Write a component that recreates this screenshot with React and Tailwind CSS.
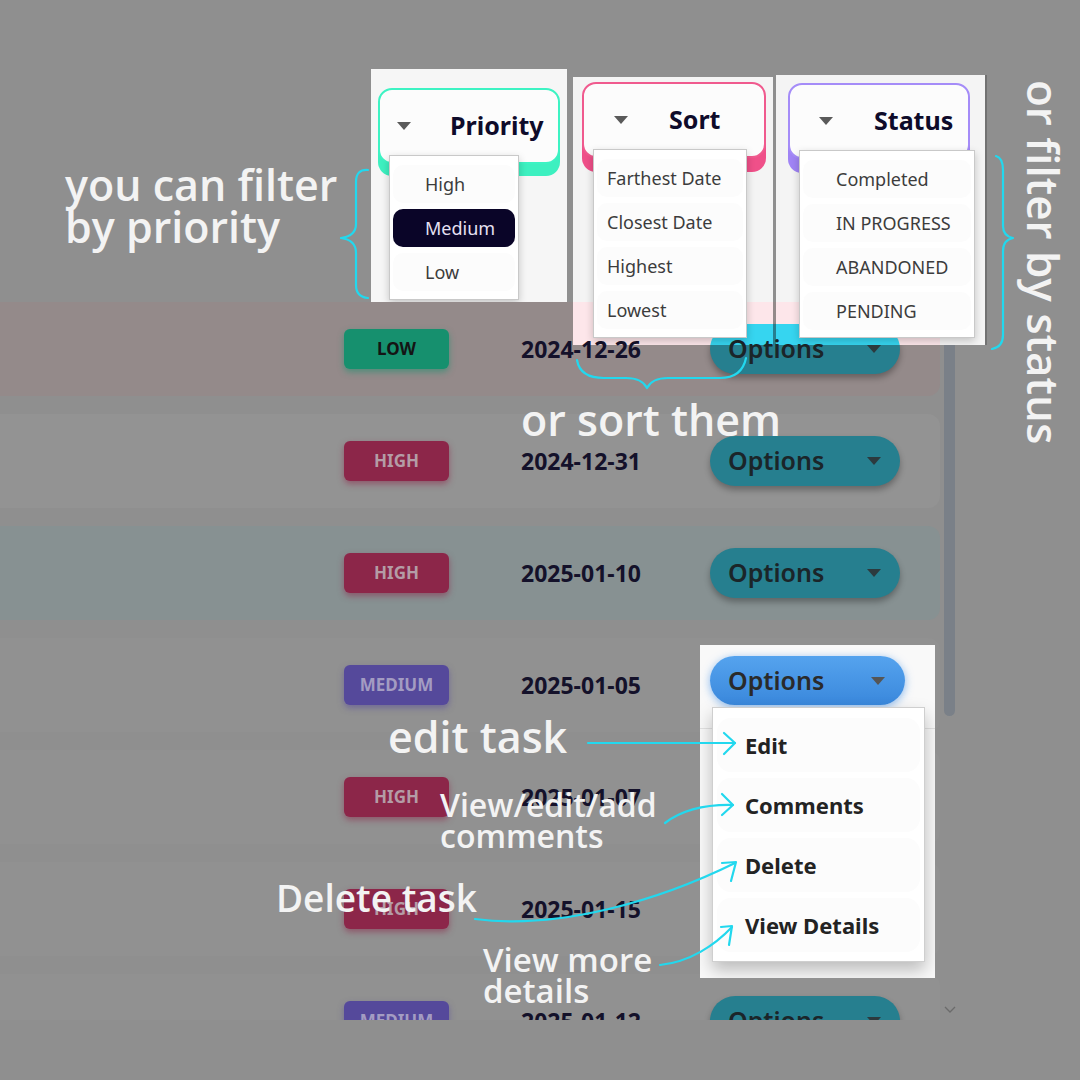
import React from 'react';

const tasks = [
  { priority: 'LOW', date: '2024-12-26', row: 'bg-[#948a8a]', bright: 'bg-[#fde6ea]' },
  { priority: 'HIGH', date: '2024-12-31', row: 'bg-[#939393]', bright: 'bg-[#f4f4f4]' },
  { priority: 'HIGH', date: '2025-01-10', row: 'bg-[#879192]', bright: 'bg-[#e6f6f7]' },
  { priority: 'MEDIUM', date: '2025-01-05', row: 'bg-[#919191]', bright: 'bg-[#f4f4f4]' },
  { priority: 'HIGH', date: '2025-01-07', row: 'bg-[#919191]', bright: 'bg-[#f4f4f4]' },
  { priority: 'HIGH', date: '2025-01-15', row: 'bg-[#919191]', bright: 'bg-[#f4f4f4]' },
  { priority: 'MEDIUM', date: '2025-01-12', row: 'bg-[#919191]', bright: 'bg-[#f4f4f4]' },
];

const badgeDim = {
  LOW: 'bg-[#16906e] text-[#141414] shadow-[0_3px_6px_rgba(22,144,110,0.55)]',
  HIGH: 'bg-[#8c2649] text-[#b49ca6] shadow-[0_3px_6px_rgba(140,38,73,0.55)]',
  MEDIUM: 'bg-[#55499b] text-[#a39cc2] shadow-[0_3px_6px_rgba(85,73,155,0.55)]',
};

const badgeBright = {
  LOW: 'bg-[#2cf0bf] text-[#141414]',
  HIGH: 'bg-[#f5407f] text-[#f0f0f0]',
  MEDIUM: 'bg-[#9581f5] text-[#f0f0f0]',
};

const Caret = ({ color = 'border-t-[#2c3a3e]' }) => (
  <span className={`w-0 h-0 border-x-[7px] border-x-transparent border-t-[8px] ${color}`} />
);

const TaskRow = ({ task, bright = false }) => (
  <div className={`h-[94px] shrink-0 flex items-center pl-[344px] rounded-r-xl ${bright ? task.bright : task.row}`}>
    <div
      className={`w-[105px] h-[40px] rounded-md flex items-center justify-center text-[17px] font-bold ${
        bright ? badgeBright[task.priority] : badgeDim[task.priority]
      }`}
    >
      {task.priority}
    </div>
    <div className="ml-[72px] w-[189px] text-[23px] font-bold text-[#14112a]">{task.date}</div>
    <div
      className={`w-[190px] h-[50px] rounded-full flex items-center justify-between pl-[18px] pr-[19px] ${
        bright ? 'bg-[#36d5f0]' : 'bg-[#267f8f] shadow-[0_4px_6px_rgba(0,0,0,0.3)]'
      }`}
    >
      <span className="text-[25px] font-semibold text-[#1b2529]">Options</span>
      <Caret />
    </div>
  </div>
);

// dropdown list that hangs below a filter button
const FilterMenu = ({ items, selected, className, textPad }) => (
  <div className={`absolute bg-white border border-[#c9c9c9] shadow-[0_3px_8px_rgba(0,0,0,0.2)] px-[3px] pt-[6px] pb-[7px] ${className}`}>
    {items.map((item) => (
      <div key={item} className="h-[44px] py-[3px]">
        <div
          className={`h-full rounded-[10px] flex items-center text-[18px] ${textPad} ${
            item === selected ? 'bg-[#0a0528] text-[#e6e0f2]' : 'bg-[#fcfcfc] text-[#3c3c3c]'
          }`}
        >
          {item}
        </div>
      </div>
    ))}
  </div>
);

const FilterButton = ({ label, className, pad, gap = 'ml-[41px]' }) => (
  <div className={`h-[76px] rounded-[14px] border-2 bg-[#fcfcfc] flex items-center ${pad} ${className}`}>
    <Caret color="border-t-[#5a5a5a]" />
    <span className={`${gap} text-[25px] font-bold text-[#0e0b2a]`}>{label}</span>
  </div>
);

export default function App() {
  return (
    <div className="relative w-[1080px] h-[1080px] overflow-hidden bg-[#8f8f8f] font-['Noto_Sans',sans-serif]">
      {/* task list behind the overlay */}
      <div className="flex pt-[302px]">
        <div className="w-[940px] h-[718px] overflow-hidden flex flex-col gap-[18px]">
          {tasks.map((t, i) => (
            <TaskRow key={i} task={t} />
          ))}
        </div>
        <div className="ml-[4px] w-[11px] h-[718px] flex flex-col justify-between items-center">
          <div className="w-[11px] h-[414px] rounded-full bg-[#7a8088]" />
          <svg width="12" height="8" viewBox="0 0 12 8" className="mb-[6px]">
            <polyline points="1,1 6,6 11,1" fill="none" stroke="#6b6b6b" strokeWidth="1.3" />
          </svg>
        </div>
      </div>

      {/* priority filter crop */}
      <div className="absolute left-[371px] top-[69px] w-[196px] h-[233px] bg-[#f6f6f6] overflow-hidden pt-[19px] pl-[7px]">
        <FilterButton
          label="Priority"
          pad="pl-[17px]"
          gap="ml-[39px]"
          className="w-[182px] border-[#3df3c3] shadow-[0_12px_0_#3df0c0]"
        />
        <FilterMenu
          items={['High', 'Medium', 'Low']}
          selected="Medium"
          className="left-[18px] top-[86px] w-[130px] h-[145px]"
          textPad="pl-[32px]"
        />
      </div>

      {/* sort crop */}
      <div className="absolute left-[573px] top-[77px] w-[200px] h-[268px] bg-[#f4f4f4] overflow-hidden pt-[5px] pl-[9px]">
        <div className="absolute left-[-573px] top-[225px] w-[940px]">
          <TaskRow task={tasks[0]} bright />
        </div>
        <FilterButton label="Sort" pad="pl-[30px]" className="relative w-[184px] border-[#f05a8e] shadow-[0_14px_0_#ef5089]" />
        <FilterMenu
          items={['Farthest Date', 'Closest Date', 'Highest', 'Lowest']}
          className="left-[20px] top-[72px] w-[154px] h-[189px]"
          textPad="pl-[10px]"
        />
      </div>

      {/* status crop */}
      <div className="absolute left-[776px] top-[75px] w-[211px] h-[270px] bg-[#f4f4f4] overflow-hidden border-r-2 border-[#727272] pt-[8px] pl-[12px]">
        <div className="absolute left-[-776px] top-[227px] w-[940px]">
          <TaskRow task={tasks[0]} bright />
        </div>
        <FilterButton label="Status" pad="pl-[29px]" className="relative w-[182px] border-[#a58cf8] shadow-[0_14px_0_#a084f5]" />
        <FilterMenu
          items={['Completed', 'IN PROGRESS', 'ABANDONED', 'PENDING']}
          className="left-[23px] top-[75px] w-[176px] h-[188px]"
          textPad="pl-[33px]"
        />
      </div>

      {/* options crop */}
      <div className="absolute left-[700px] top-[645px] w-[235px] h-[333px] bg-[#f9f9f9] overflow-hidden pt-[11px] pl-[10px]">
        <div className="absolute left-0 top-[83px] w-full h-[1px] bg-[#e2e2e2]" />
        <div className="relative w-[195px] h-[49px] rounded-full bg-gradient-to-b from-[#55a3ee] to-[#3a88dc] shadow-[0_2px_8px_rgba(60,140,230,0.6)] flex items-center justify-between pl-[18px] pr-[20px]">
          <span className="text-[25px] font-semibold text-[#2a2a2a]">Options</span>
          <Caret color="border-t-[#555555]" />
        </div>
        <div className="absolute left-[12px] top-[62px] w-[213px] h-[255px] bg-white border border-[#cfcfcf] shadow-[0_8px_16px_rgba(0,0,0,0.25)] px-[4px] pt-[7px]">
          {['Edit', 'Comments', 'Delete', 'View Details'].map((item) => (
            <div key={item} className="h-[60px] py-[3px]">
              <div className="h-full rounded-[14px] bg-[#fcfcfc] flex items-center pl-[28px] text-[22px] font-bold text-[#232323]">
                {item}
              </div>
            </div>
          ))}
        </div>
      </div>

      {/* annotations */}
      <div className="absolute inset-0 pointer-events-none font-['Open_Sans',sans-serif] font-semibold text-[#f3f3f3]">
        <div className="absolute left-[65px] top-[164px] text-[43px] leading-[42px]">
          you can filter
          <br />
          by priority
        </div>
        <div className="absolute left-[521px] top-[398px] text-[43px] leading-[43px]">or sort them</div>
        <div className="absolute left-[1022px] top-[80px] text-[44px] leading-[44px] [writing-mode:vertical-rl] whitespace-nowrap">
          or filter by status
        </div>
        <div className="absolute left-[388px] top-[715px] text-[43px] leading-[43px]">edit task</div>
        <div className="absolute left-[440px] top-[789px] text-[32px] leading-[31px]">
          View/edit/add
          <br />
          comments
        </div>
        <div className="absolute left-[276px] top-[879px] text-[37px] leading-[37px]">Delete task</div>
        <div className="absolute left-[483px] top-[944px] text-[33px] leading-[31px]">
          View more
          <br />
          details
        </div>
      </div>

      <svg className="absolute inset-0 pointer-events-none" width="1080" height="1080" viewBox="0 0 1080 1080">
        <g fill="none" stroke="#22d8ee" strokeWidth="2.2" strokeLinecap="round" strokeLinejoin="round">
          {/* priority brace */}
          <path d="M368 170 Q356 169 356 182 L356 224 Q356 236 341 238 Q356 240 356 253 L356 285 Q356 297 368 298" />
          {/* status brace */}
          <path d="M996 156 Q1003 158 1003 170 L1003 226 Q1003 236 1013 238 Q1003 240 1003 251 L1003 335 Q1003 347 992 349" />
          {/* sort brace */}
          <path d="M577 360 Q580 378 604 378 L626 378 Q642 378 647 388 Q652 378 668 378 L720 378 Q742 378 746 358" />
          {/* edit */}
          <path d="M588 743 L735 743" />
          <path d="M724 733 L735 743 L724 754" />
          {/* comments */}
          <path d="M665 823 Q690 804 733 805" />
          <path d="M722 794 L733 805 L722 815" />
          {/* delete */}
          <path d="M475 919 C560 930 660 900 735 863" />
          <path d="M722 863 L736 862 L731 881" />
          {/* view details */}
          <path d="M660 965 C690 962 715 945 732 927" />
          <path d="M721 927 L732 926 L729 945" />
        </g>
      </svg>
    </div>
  );
}
